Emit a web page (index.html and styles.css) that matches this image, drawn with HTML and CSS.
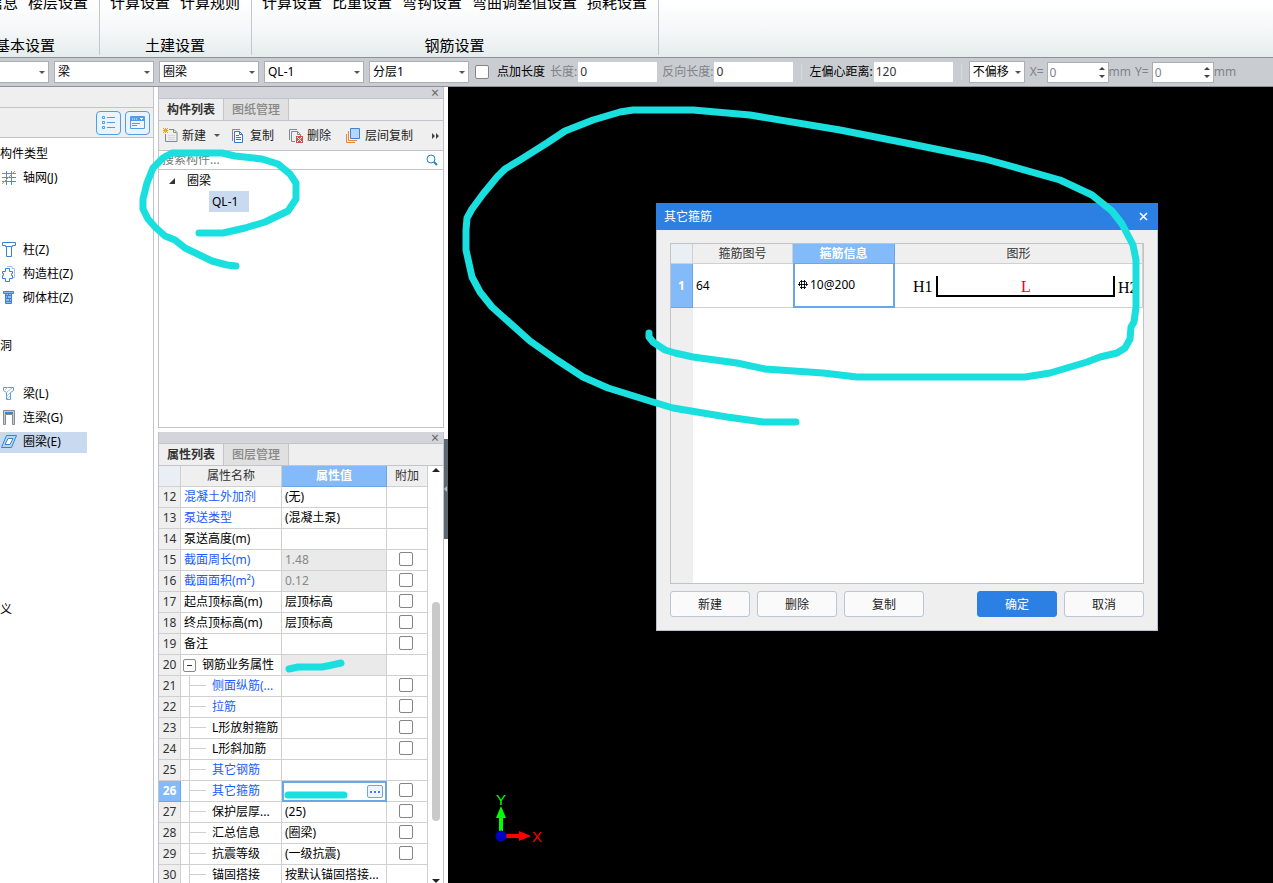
FILE: index.html
```html
<!DOCTYPE html>
<html lang="zh-CN">
<head>
<meta charset="utf-8">
<title>其它箍筋</title>
<link rel="stylesheet" href="styles.css">
</head>
<body>
<header class="ribbon">
  <section class="ribbon-group ribbon-group-first">
    <div class="ribbon-items"><a href="#">信息</a><a href="#">楼层设置</a></div>
    <h2 class="ribbon-title">基本设置</h2>
  </section>
  <section class="ribbon-group">
    <div class="ribbon-items"><a href="#">计算设置</a><a href="#">计算规则</a></div>
    <h2 class="ribbon-title">土建设置</h2>
  </section>
  <section class="ribbon-group">
    <div class="ribbon-items"><a href="#">计算设置</a><a href="#">比重设置</a><a href="#">弯钩设置</a><a href="#">弯曲调整值设置</a><a href="#">损耗设置</a></div>
    <h2 class="ribbon-title">钢筋设置</h2>
  </section>
</header>

<div class="options">
  <span class="combo combo-floor"><select aria-label="楼层"><option></option></select></span>
  <span class="combo"><select aria-label="构件大类"><option>梁</option></select></span>
  <span class="combo"><select aria-label="构件类型"><option>圈梁</option></select></span>
  <span class="combo"><select aria-label="构件"><option>QL-1</option></select></span>
  <span class="combo"><select aria-label="分层"><option>分层1</option></select></span>
  <label class="check-label"><input type="checkbox" class="check">点加长度</label>
  <div class="field dim"><label for="len">长度:</label><input id="len" type="text" value="0"></div>
  <div class="field dim"><label for="rlen">反向长度:</label><input id="rlen" type="text" value="0"></div>
  <span class="separator"></span>
  <div class="field"><label for="ecc">左偏心距离:</label><input id="ecc" type="text" value="120"></div>
  <span class="separator"></span>
  <span class="combo combo-offset"><select aria-label="偏移"><option>不偏移</option></select></span>
  <div class="spin"><label for="ox">X=</label><span class="spin-box"><input id="ox" type="text" value="0"></span>mm</div>
  <div class="spin"><label for="oy">Y=</label><span class="spin-box"><input id="oy" type="text" value="0"></span>mm</div>
</div>

<main class="workspace">
  <nav class="modules">
    <div class="modules-top"></div>
    <div class="modules-bar">
      <button type="button" class="view-button" aria-label="列表视图">
        <svg width="14" height="16" viewBox="0 0 14 16" fill="none" stroke="#4f9eea"><path d="M.5 1.500h2v2h-2zM.5 6.500h2v2h-2zM.5 11.500h2v2h-2zM5 2.500h8M5 7.500h8M5 12.500h8"/></svg>
      </button>
      <button type="button" class="view-button" aria-label="窗口视图">
        <svg width="15" height="14" viewBox="0 0 15 14"><path d="M.5.5h14v12H.5z" fill="#eef6ff" stroke="#4f9eea"/><path d="M1 1h13v4H1z" fill="#4f9eea"/><path d="M2 3h1M4 3h1M6 3h1M10 2.500h3M11 3.500h1" stroke="#fff"/><path d="M2 7.500h8M2 9.500h5" stroke="#4f9eea"/></svg>
      </button>
    </div>
    <ul class="module-list">
      <li>构件类型</li>
      <li><a href="#"><svg width="16" height="16" viewBox="0 0 16 16" fill="none"><path d="M5.500 1v14M10.500 1v14M1 3.500h14M1 7.500h14M1 11.500h14" stroke="#4b8fd6"/><path d="M1 14 14 1" stroke="#e08a50"/></svg>轴网(J)</a></li>
      <li></li><li></li>
      <li><a href="#"><svg width="16" height="16" viewBox="0 0 16 16" fill="#fff" stroke="#3c82cf"><path d="M1.500.5h13v3h-3v1h-7v-1h-3zM5.500 4.500h5v10h-5z"/></svg>柱(Z)</a></li>
      <li><a href="#"><svg width="16" height="16" viewBox="0 0 16 16" fill="none"><path d="M6 .5h5v2h2.500v9H12" stroke="#9cc3ec"/><path d="M4.500 2.500h4v3h3v2h-1v2h1v3h-3v3h-4v-3h-3v-3h1v-2h-1v-2h3z" fill="#fff" stroke="#3c82cf"/></svg>构造柱(Z)</a></li>
      <li><a href="#"><svg width="16" height="16" viewBox="0 0 16 16" fill="#8fbceb" stroke="#3c82cf"><path d="M2.500 1.500h10v2h-10zM4.500 3.500h6v10h-6zM5 5.500h6M5 8.500h6M5 11.500h6M7.500 4v2M6.500 6v3M8.500 9v3"/></svg>砌体柱(Z)</a></li>
      <li></li>
      <li>洞</li>
      <li></li>
      <li><a href="#"><svg width="16" height="16" viewBox="0 0 16 16" fill="none" stroke="#5c9ee2"><path d="M2.500 1.500h10v3l-3 2v7h-4v-7l-3-2z"/><path d="m4 4 3-3M6 6l5-4M6 10l3-3M6 13l3-3" stroke="#9cc3ec"/></svg>梁(L)</a></li>
      <li><a href="#"><svg width="16" height="16" viewBox="0 0 16 16"><path d="M2.500.5h11v14h-2v-10h-7v10h-2z" fill="#c8d0d6" stroke="#7f8c95"/><path d="M4 3h8" stroke="#3c82cf" stroke-width="2"/></svg>连梁(G)</a></li>
      <li><a href="#" class="current"><svg width="16" height="16" viewBox="0 0 16 16" fill="#b6d5f6" stroke="#3c82cf"><path d="M5.500 1.500h10l-5 12H.5z"/><path d="M7 4.500h5l-3 6H4z" fill="#fff"/></svg>圈梁(E)</a></li>
      <li></li><li></li><li></li><li></li><li></li><li></li>
      <li>义</li>
    </ul>
  </nav>

  <div class="docks">
    <section class="dock dock-components">
      <div class="dock-title"><button type="button" class="close" aria-label="关闭">×</button></div>
      <div class="tabs"><button type="button" class="tab active">构件列表</button><button type="button" class="tab">图纸管理</button></div>
      <div class="tools">
        <button type="button" class="tool tool-new"><svg width="16" height="16" viewBox="0 0 16 16" fill="none"><path d="M6 1.500h5l3 3v9H2.500V6" stroke="#7f8a94"/><path d="M10.500 1.500v3h3" stroke="#7f8a94"/><path d="M5 7.500h7M5 9.500h7M5 11.500h7" stroke="#d8d3e0"/><path d="m0 0 5 5M5 0 0 5M2.500 0v5M0 2.500h5" stroke="#f0a030"/></svg>新建<span class="caret"></span></button>
        <button type="button" class="tool tool-copy"><svg width="16" height="16" viewBox="0 0 16 16" fill="none"><path d="M1.500 13V1.500H9" stroke="#7f8a94"/><path d="M3.500 3.500h5l3 3v8h-8z" fill="#fff" stroke="#2f78cf"/><path d="M8.500 3.500v3h3M5 7.500h3M5 9.500h5M5 11.500h5" stroke="#2f78cf"/></svg>复制</button>
        <button type="button" class="tool tool-delete"><svg width="16" height="16" viewBox="0 0 16 16" fill="none"><path d="M1.500 12V1.500H9M7 13.500H3.500v-10h6l3 3V8M9.500 3.500v3h3" stroke="#7f8a94"/><path d="M8 8h7v7H8z" fill="#d2504c"/><path d="m9 9 5 5m0-5-5 5" stroke="#fff"/></svg>删除</button>
        <button type="button" class="tool tool-layer"><svg width="16" height="16" viewBox="0 0 16 16" fill="none"><path d="M1.500 6v8.500H10" stroke="#ee8435"/><path d="M3.500 3v9.500H12" stroke="#ee8435"/><path d="M5.500.5h9v10h-9z" fill="#b5d6ff" stroke="#3d84d8"/></svg>层间复制</button>
        <button type="button" class="more" aria-label="更多"><svg width="8" height="6" viewBox="0 0 8 6" fill="#444"><path d="M0 0l3 3-3 3zM4 0l3 3-3 3z"/></svg></button>
      </div>
      <div class="search"><input type="text" placeholder="搜索构件..." aria-label="搜索构件"><svg width="12" height="12" viewBox="0 0 12 12" fill="none" stroke="#1c86d1"><circle cx="5" cy="5" r="4"/><path d="m8 8 3 3" stroke-width="2"/></svg></div>
      <ul class="tree">
        <li><svg width="6" height="6" viewBox="0 0 6 6"><path d="M6 0v6H0z" fill="#333"/></svg>圈梁</li>
        <li class="tree-child"><span>QL-1</span></li>
      </ul>
    </section>

    <section class="dock dock-properties">
      <div class="dock-title"><button type="button" class="close" aria-label="关闭">×</button></div>
      <div class="tabs"><button type="button" class="tab active">属性列表</button><button type="button" class="tab">图层管理</button></div>
      <div class="grid-area">
        <table class="props">
          <colgroup><col class="c-num"><col class="c-name"><col class="c-value"><col class="c-add"></colgroup>
          <thead><tr><th class="corner"></th><th>属性名称</th><th class="on">属性值</th><th>附加</th></tr></thead>
          <tbody>
            <tr><th>12</th><td class="blue">混凝土外加剂</td><td>(无)</td><td></td></tr>
            <tr><th>13</th><td class="blue">泵送类型</td><td>(混凝土泵)</td><td></td></tr>
            <tr><th>14</th><td>泵送高度(m)</td><td></td><td></td></tr>
            <tr><th>15</th><td class="blue">截面周长(m)</td><td class="locked">1.48</td><td><input type="checkbox" class="check" aria-label="附加 截面周长"></td></tr>
            <tr><th>16</th><td class="blue">截面面积(m²)</td><td class="locked">0.12</td><td><input type="checkbox" class="check" aria-label="附加 截面面积"></td></tr>
            <tr><th>17</th><td>起点顶标高(m)</td><td>层顶标高</td><td><input type="checkbox" class="check" aria-label="附加 起点顶标高"></td></tr>
            <tr><th>18</th><td>终点顶标高(m)</td><td>层顶标高</td><td><input type="checkbox" class="check" aria-label="附加 终点顶标高"></td></tr>
            <tr><th>19</th><td>备注</td><td></td><td><input type="checkbox" class="check" aria-label="附加 备注"></td></tr>
            <tr><th>20</th><td><div class="parent"><button type="button" class="fold" aria-label="折叠"></button>钢筋业务属性</div></td><td class="locked"></td><td></td></tr>
            <tr><th>21</th><td class="blue"><div class="child">侧面纵筋(...</div></td><td></td><td><input type="checkbox" class="check" aria-label="附加 侧面纵筋"></td></tr>
            <tr><th>22</th><td class="blue"><div class="child">拉筋</div></td><td></td><td><input type="checkbox" class="check" aria-label="附加 拉筋"></td></tr>
            <tr><th>23</th><td><div class="child">L形放射箍筋</div></td><td></td><td><input type="checkbox" class="check" aria-label="附加 L形放射箍筋"></td></tr>
            <tr><th>24</th><td><div class="child">L形斜加筋</div></td><td></td><td><input type="checkbox" class="check" aria-label="附加 L形斜加筋"></td></tr>
            <tr><th>25</th><td class="blue"><div class="child">其它钢筋</div></td><td></td><td></td></tr>
            <tr><th class="on">26</th><td class="blue"><div class="child">其它箍筋</div></td><td class="editing"><button type="button" class="browse" aria-label="编辑其它箍筋"></button></td><td><input type="checkbox" class="check" aria-label="附加 其它箍筋"></td></tr>
            <tr><th>27</th><td><div class="child">保护层厚...</div></td><td>(25)</td><td><input type="checkbox" class="check" aria-label="附加 保护层厚"></td></tr>
            <tr><th>28</th><td><div class="child">汇总信息</div></td><td>(圈梁)</td><td><input type="checkbox" class="check" aria-label="附加 汇总信息"></td></tr>
            <tr><th>29</th><td><div class="child">抗震等级</div></td><td>(一级抗震)</td><td><input type="checkbox" class="check" aria-label="附加 抗震等级"></td></tr>
            <tr><th>30</th><td><div class="child">锚固搭接</div></td><td>按默认锚固搭接...</td><td></td></tr>
          </tbody>
        </table>
        <div class="scroll"><span class="arrow-up"></span><span class="thumb"></span><span class="arrow-down"></span></div>
      </div>
    </section>
  </div>

  <div class="splitter"><span class="splitter-grip"></span></div>

  <section class="canvas">
    <svg class="axes" width="56" height="52" viewBox="0 0 56 52">
      <path d="M13 26v16" stroke="#0f0" stroke-width="4"/><path d="M13 14l5 12H8z" fill="#0f0"/>
      <path d="M18 44h14" stroke="#f00" stroke-width="4"/><path d="M43 44l-12-5v10z" fill="#f00"/>
      <circle cx="13" cy="44" r="5.500" fill="#0000c0"/>
      <text x="13" y="13" text-anchor="middle" class="axis-y">Y</text>
      <text x="49" y="50" text-anchor="middle" class="axis-x">X</text>
    </svg>

    <div class="dialog" role="dialog" aria-labelledby="dialog-title">
      <div class="dialog-head"><h1 id="dialog-title">其它箍筋</h1><button type="button" class="dialog-close" aria-label="关闭"><svg width="9" height="9" viewBox="0 0 9 9" stroke="#fff" stroke-width="1.600"><path d="m1 1 7 7M8 1 1 8"/></svg></button></div>
      <div class="dialog-body">
        <div class="sheet">
          <table class="bars">
            <colgroup><col class="b-num"><col class="b-id"><col class="b-info"><col></colgroup>
            <thead><tr><th class="corner"></th><th>箍筋图号</th><th class="on">箍筋信息</th><th>图形</th></tr></thead>
            <tbody><tr>
              <th class="on">1</th><td>64</td>
              <td class="editing"><div class="rebar"><svg width="11" height="11" viewBox="0 0 11 11" fill="none" stroke="#000"><path d="M3.500 0v9M6.500 0v9M2 1.500h6M1.500 2v4M8.500 2v4M0 4.500h10M2 7.500h6" stroke-width=".9"/></svg>10@200</div></td>
              <td class="shape"><svg width="244" height="42" viewBox="0 0 244 42">
                <path d="M42 11v20h177V11" fill="none" stroke="#000" stroke-width="2"/>
                <text x="18" y="27">H1</text><text x="131" y="27" text-anchor="middle" class="shape-len">L</text><text x="223" y="28">H2</text>
              </svg></td>
            </tr></tbody>
          </table>
        </div>
        <div class="actions">
          <button type="button" class="action">新建</button><button type="button" class="action">删除</button><button type="button" class="action">复制</button>
          <button type="button" class="action primary">确定</button><button type="button" class="action">取消</button>
        </div>
      </div>
    </div>
  </section>
</main>

<svg class="ink" width="1273" height="883" viewBox="0 0 1273 883">
  <path d="M796 422L763 422L727 417L673 408L653 402L608 388L583 377L557 360L530 341L492 307L480 292L472 277L466 250L466 230L467 218L472 209L483 194L497 177L505 169L520 160L547 143L565 131L593 120L620 112L633 110L693 110L750 115L840 130L906 143L985 159L1060 180L1092 195L1112 211L1122 224L1133 245L1136 260L1136 307L1134 322L1131 327L1130 339L1125 348L1117 353L1100 357L1087 362L1050 373L1025 377L857 377L823 373L765 369L737 363L693 357L675 353L665 350L653 342L649 337L649 333"/>
  <path d="M236 266L227 265L212 261L185 248L175 240L165 236L155 227L148 219L143 209L143 199L147 183L153 168L163 158L172 153L222 153L235 156L262 159L278 164L290 174L296 183L296 199L288 211L265 222L245 228L223 233L199 233"/>
  <path d="M289 669L298 667L322 667L332 665L341 663"/>
  <path d="M288 795L344 795"/>
</svg>
</body>
</html>
```
FILE: styles.css
```css
* { box-sizing: border-box; }

body {
  margin: 0;
  height: 100vh;
  display: flex;
  flex-direction: column;
  overflow: hidden;
  position: relative;
  background: #fff;
  color: #000;
  font: 12px/20px "Noto Sans", "Noto Sans CJK SC", sans-serif;
}

button, input, select { font: inherit; color: inherit; margin: 0; }
button { padding: 0; border: 0; background: none; }
a { color: inherit; text-decoration: none; }
ul { list-style: none; margin: 0; padding: 0; }
svg { display: block; flex: none; }

/* ribbon */
.ribbon {
  flex: none;
  height: 58px;
  display: flex;
  padding-bottom: 2px;
  border-bottom: 1px solid #8b9297;
  background: linear-gradient(#fff, #f3f6f7 60%, #e6ebeb);
  font-size: 15px;
}
.ribbon-group {
  display: flex;
  flex-direction: column;
  justify-content: space-between;
  padding: 0 11px 0 10px;
  border-right: 1px solid #c3c7cb;
}
.ribbon-group-first { width: 148px; margin-left: -48px; }
.ribbon-items { display: flex; gap: 10px; justify-content: flex-end; margin-top: -8px; }
.ribbon-items a { white-space: nowrap; }
.ribbon-title { margin: 0; font-size: 15px; line-height: 20px; font-weight: 400; text-align: center; }

/* option bar */
.options {
  flex: none;
  height: 29px;
  display: flex;
  align-items: center;
  border-bottom: 1px solid #8b9297;
  background: #c9ccd1;
  white-space: nowrap;
}
.combo { position: relative; flex: none; width: 100px; margin-right: 5px; }
.combo-floor { width: 50px; margin-left: -1px; }
.combo-offset { width: 56px; }
.combo select {
  appearance: none;
  display: block;
  width: 100%;
  height: 22px;
  padding: 0 3px;
  border: 1px solid #abaeb3;
  border-radius: 0;
  background: #fff;
}
.combo::after, .caret {
  content: "";
  border: 3px solid transparent;
  border-top-color: #555;
  border-bottom: 0;
}
.combo::after { position: absolute; right: 4px; top: 10px; pointer-events: none; }
.check {
  appearance: none;
  display: block;
  flex: none;
  width: 14px;
  height: 14px;
  border: 1px solid #858585;
  border-radius: 2px;
  background: #fff;
}
.check-label { display: flex; align-items: center; gap: 8px; margin: 0 5px 0 1px; }
.field { display: flex; align-items: center; gap: 1px; margin-right: 5px; }
.field input { width: 79px; height: 20px; padding: 0 2px; border: 0; background: #fff; color: #333; }
.dim label { color: #808388; }
.separator { width: 1px; height: 16px; margin: 0 7px 0 3px; background: #d6d8dc; }
.spin { display: flex; align-items: center; color: #808388; margin-right: 4px; }
.spin-box { position: relative; margin-left: 3px; }
.spin-box input { display: block; width: 62px; height: 21px; padding: 0 2px; border: 1px solid #abaeb3; background: #fff; }
.spin-box::before, .spin-box::after { content: ""; position: absolute; right: 4px; border: 3px solid transparent; }
.spin-box::before { top: 5px; border-bottom-color: #444; border-top: 0; }
.spin-box::after { bottom: 5px; border-top-color: #444; border-bottom: 0; }

/* workspace */
.workspace { flex: 1; min-height: 0; display: flex; }
.modules { flex: none; width: 154px; border-right: 1px solid #c3c4cb; overflow: hidden; }
.modules-top { height: 21px; border-bottom: 1px solid #c3c4cb; background: #efefef; }
.modules-bar {
  display: flex;
  align-items: center;
  justify-content: flex-end;
  gap: 4px;
  height: 30px;
  padding-right: 3px;
  border-bottom: 1px solid #c3c4cb;
  background: #efefef;
}
.view-button { display: grid; place-items: center; width: 25px; height: 24px; border: 1px solid #4f9eea; border-radius: 4px; background: #eaf4ff; }
.module-list { padding-top: 4px; }
.module-list li { display: flex; align-items: center; height: 24px; }
.module-list a { display: flex; align-items: center; gap: 6px; height: 21px; width: 87px; padding-left: 1px; }
.module-list .current { background: #c9d9ef; }

.docks { flex: none; width: 286px; margin-left: 4px; display: flex; flex-direction: column; gap: 4px; }
.dock { border: 1px solid #c3c4cb; border-top: 0; display: flex; flex-direction: column; min-height: 0; }
.dock-components { height: 341px; flex: none; }
.dock-properties { flex: 1; border-bottom: 0; }
.dock-title { flex: none; display: flex; justify-content: flex-end; height: 12px; border-bottom: 1px solid #c3c4cb; background: #d4d5da; }
.close { width: 16px; font-size: 14px; line-height: 12px; color: #666; }
.tabs { flex: none; display: flex; height: 22px; border-bottom: 1px solid #c3c4cb; background: #efefef; }
.tab { width: 65px; border-right: 1px solid #c3c4cb; background: #e0e0e0; color: #888; font-weight: 500; }
.tab.active { background: #efefef; color: #333; font-weight: 700; }
.tools { flex: none; display: flex; align-items: center; height: 30px; padding: 0 3px 0 4px; border-bottom: 1px solid #c3c4cb; background: #efefef; color: #222; }
.tool { display: flex; align-items: center; gap: 3px; margin-right: 14px; white-space: nowrap; }
.tool-new { margin-right: 11px; }
.tool-new .caret { margin-left: 5px; }
.tool-layer { gap: 4px; }
.more { margin-left: auto; }
.search { flex: none; display: flex; align-items: center; height: 19px; padding-right: 5px; border-bottom: 1px solid #c3c4cb; }
.search input { flex: 1; min-width: 0; height: 18px; padding: 0 3px; border: 0; background: none; }
.search input::placeholder { color: #777; opacity: 1; }
.tree li { display: flex; align-items: center; gap: 12px; height: 21px; padding-left: 10px; }
.tree .tree-child { padding-left: 50px; }
.tree-child span { padding: 0 11px 0 3px; line-height: 21px; background: #c9d9ef; }

/* property grid */
.grid-area { flex: 1; min-height: 0; display: flex; overflow: hidden; }
table { border-collapse: separate; border-spacing: 0; table-layout: fixed; }
th, td { padding: 0; font-weight: 400; border-right: 1px solid #d0d0d0; border-bottom: 1px solid #d0d0d0; white-space: nowrap; overflow: hidden; }
th { background: #efefef; color: #333; text-align: center; }
.corner { background: #eaeff6; }
th.on { background: #82bafa; color: #fff; font-weight: 700; border-color: #6aa7e6; }
.props { flex: none; width: 269px; height: max-content; }
.c-num { width: 22px; }
.c-name { width: 101px; }
.c-value { width: 105px; }
.c-add { width: 41px; }
.props th, .props td { height: 21px; line-height: 20px; }
.props td { padding-left: 3px; }
.props td:last-child { padding: 0 0 2px 12px; }
.blue { color: #1a5cff; }
.props .locked { background: #eaeaea; color: #888; }
.parent { display: flex; align-items: center; gap: 6px; }
.fold { display: grid; place-items: center; width: 13px; height: 13px; margin-left: -1px; border: 1px solid #888; border-radius: 2px; background: #fff; }
.fold::after { content: ""; width: 5px; height: 1px; background: #333; }
.child { position: relative; padding-left: 28px; }
.child::before { content: ""; position: absolute; left: 5px; top: 0; height: 20px; border-left: 1px solid #d0d0d0; }
.child::after { content: ""; position: absolute; left: 5px; top: 9px; width: 17px; border-top: 1px solid #d0d0d0; }
.props .editing { border: 2px solid #6aa7e6; padding: 0 2px 0 0; }
.browse { display: flex; align-items: center; justify-content: center; width: 16px; height: 13px; margin-left: auto; border: 1px solid #6aa7e6; border-radius: 2px; background: #eef5fd; }
.browse::after { content: ""; width: 10px; height: 2px; background: repeating-linear-gradient(90deg, #3d84d8 0 2px, transparent 2px 4px); }
.scroll { flex: 1; display: flex; flex-direction: column; align-items: center; padding-top: 2px; }
.arrow-up { border: 4px solid transparent; border-bottom-color: #222; border-top: 0; }
.thumb { width: 8px; height: 219px; margin-top: 130px; border-radius: 4px; background: #c9c9c9; }
.arrow-down { margin: auto 0 0; border: 4px solid transparent; border-top-color: #222; border-bottom: 0; }

.splitter { flex: none; width: 4px; padding-top: 352px; }
.splitter-grip { display: flex; align-items: center; width: 4px; height: 100px; background: #5d6872; }
.splitter-grip::after { content: ""; border: 3px solid transparent; border-right-color: #b8bec4; border-left: 0; }

/* drawing area */
.canvas { flex: 1; min-width: 0; position: relative; background: #000; overflow: hidden; }
.axes { position: absolute; left: 40px; bottom: 39px; }
.axes text { font: 15px "Liberation Sans", Arial, sans-serif; }
.axes .axis-y { fill: #0f0; }
.axes .axis-x { fill: #f00; }

/* dialog */
.dialog { position: absolute; left: 208px; top: 116px; width: 502px; height: 428px; display: flex; flex-direction: column; border: 1px solid #b9c1d6; border-top: 0; background: #efefef; }
.dialog-head { flex: none; display: flex; align-items: center; justify-content: space-between; height: 27px; margin: 0 -1px; padding: 0 10px 0 8px; background: #2c80e3; color: #fff; }
.dialog-head h1 { margin: 0; font-size: 12px; font-weight: 400; }
.dialog-body { flex: 1; display: flex; flex-direction: column; gap: 7px; padding: 13px; }
.sheet { flex: 1; display: flex; border: 1px solid #c3c3c3; background: linear-gradient(90deg, #efefef 22px, #fff 22px); }
.bars { width: 100%; height: max-content; }
.b-num { width: 22px; }
.b-id { width: 100px; }
.b-info { width: 102px; }
.bars thead th { height: 20px; padding-top: 1px; line-height: 18px; }
.bars tbody th, .bars tbody td { height: 44px; }
.bars td { padding-left: 3px; background: #fff; }
.bars td:nth-child(2) { border-right: 0; }
.bars .editing { border: 2px solid #6aa7e6; border-top: 0; }
.rebar { display: flex; align-items: center; gap: 1px; }
.bars .shape { padding: 0; }
.shape text { font: 16px "Liberation Serif", "Times New Roman", serif; }
.shape .shape-len { fill: #f00020; }
.actions { flex: none; display: flex; gap: 7px; }
.action { width: 80px; height: 26px; padding-top: 1px; border: 1px solid #bcc5d6; border-radius: 3px; background: #fafafa; color: #222; }
.primary { margin-left: auto; border-color: #2c80e3; background: #2c80e3; color: #fff; }

/* hand-drawn marks */
.ink { position: absolute; left: 0; top: 0; pointer-events: none; fill: none; stroke: #19dfdf; stroke-width: 7; stroke-linecap: round; stroke-linejoin: round; }
```
